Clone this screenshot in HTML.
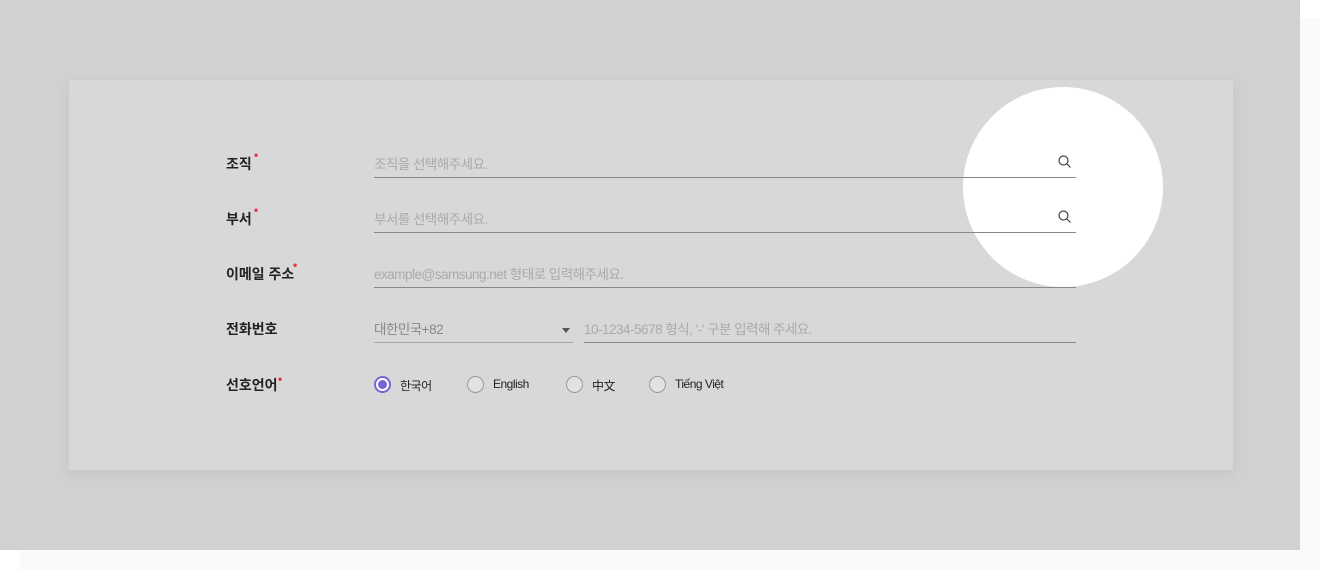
<!DOCTYPE html>
<html><head><meta charset="utf-8"><style>
*{margin:0;padding:0;box-sizing:border-box}
body{width:1320px;height:570px;background:#fafafa;position:relative;overflow:hidden;font-family:"Liberation Sans","Noto Sans CJK KR",sans-serif}
.bg{position:absolute;left:0;top:0;width:1300px;height:550px;background:#d0d1d3}
.tr{position:absolute;left:1300px;top:0;width:20px;height:18px;background:#fff}
.bl{position:absolute;left:0;top:550px;width:20px;height:20px;background:#fff}
.card{position:absolute;left:69px;top:80px;width:1164px;height:390px;background:#d8d8d8;box-shadow:0 4px 14px rgba(0,0,0,.06)}
.circle{position:absolute;left:963px;top:87px;width:200px;height:200px;border-radius:50%;background:#fff}
.lab{position:absolute;left:226px;font-size:14px;font-weight:bold;color:#222}
.lab i{position:absolute;color:#e0334c;font-style:normal;font-size:12px;top:-6px}
.ph{position:absolute;font-size:13.5px;color:#aaa;letter-spacing:-0.5px}
.ln{position:absolute;height:1px;background:#888}
.rad{position:absolute;top:376px;width:17px;height:17px;border-radius:50%;border:1px solid #9a9a9a;background:#e2e2e2}
.rad.on{border:2px solid #7a62d4;background:#fff}
.rad.on::after{content:"";position:absolute;left:2px;top:2px;width:9px;height:9px;border-radius:50%;background:#7a62d4}
.rl{position:absolute;top:377px;font-size:12px;color:#222;letter-spacing:-0.5px}
svg{position:absolute}
</style></head><body>
<div class="bg"></div><div class="tr"></div><div class="bl"></div>
<div class="card"></div>
<div class="circle"></div>

<div class="lab" style="top:154px">조직<i style="left:28px">•</i></div>
<div class="ph" style="left:374px;top:153px">조직을 선택해주세요.</div>
<div class="ln" style="left:374px;top:177px;width:702px"></div>
<svg style="left:1057px;top:154px" width="16" height="16" viewBox="0 0 16 16"><circle cx="6.5" cy="6.5" r="4.5" fill="none" stroke="#444" stroke-width="1.2"/><path d="M10 10L13.5 13.5" stroke="#444" stroke-width="1.2"/></svg>

<div class="lab" style="top:209px">부서<i style="left:28px">•</i></div>
<div class="ph" style="left:374px;top:208px">부서를 선택해주세요.</div>
<div class="ln" style="left:374px;top:232px;width:702px"></div>
<svg style="left:1057px;top:209px" width="16" height="16" viewBox="0 0 16 16"><circle cx="6.5" cy="6.5" r="4.5" fill="none" stroke="#444" stroke-width="1.2"/><path d="M10 10L13.5 13.5" stroke="#444" stroke-width="1.2"/></svg>

<div class="lab" style="top:264px">이메일 주소<i style="left:67px">•</i></div>
<div class="ph" style="left:374px;top:263px">example@samsung.net 형태로 입력해주세요.</div>
<div class="ln" style="left:374px;top:287px;width:702px"></div>

<div class="lab" style="top:319px">전화번호</div>
<div class="ph" style="left:374px;top:318px;color:#888">대한민국+82</div>
<svg style="left:562px;top:328px" width="8" height="5"><path d="M0 0H8L4 5Z" fill="#555"/></svg>
<div class="ln" style="left:374px;top:342px;width:199px;background:#aaa"></div>
<div class="ph" style="left:584px;top:318px">10-1234-5678 형식, '-' 구분 입력해 주세요.</div>
<div class="ln" style="left:584px;top:342px;width:492px"></div>

<div class="lab" style="top:375px">선호언어<i style="left:52px;top:-3px">•</i></div>
<div class="rad on" style="left:374px"></div><div class="rl" style="left:400px">한국어</div>
<div class="rad" style="left:467px"></div><div class="rl" style="left:493px">English</div>
<div class="rad" style="left:566px"></div><div class="rl" style="left:592px">中文</div>
<div class="rad" style="left:649px"></div><div class="rl" style="left:675px">Tiếng Việt</div>
</body></html>
